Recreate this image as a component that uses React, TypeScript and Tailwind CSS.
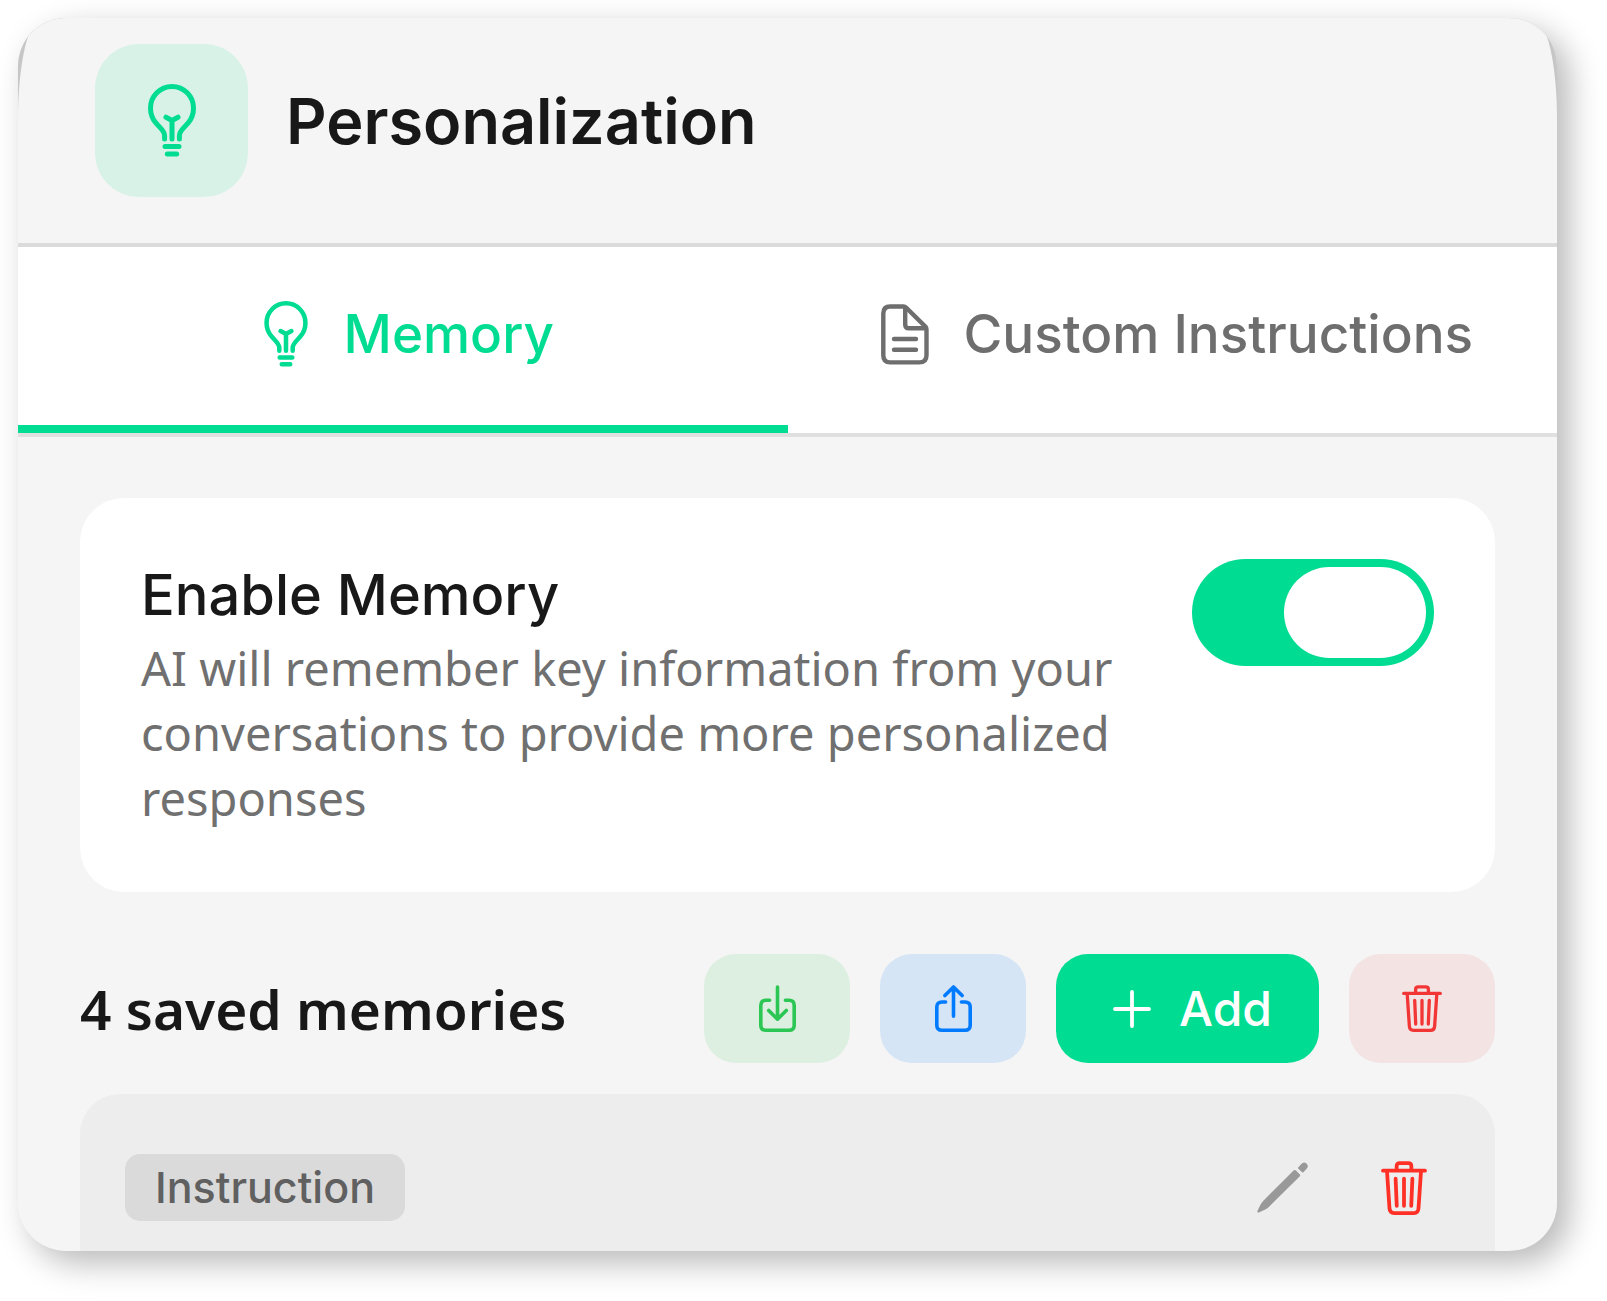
import { useState } from "react";
import type { ReactNode } from "react";

type IconProps = { className?: string };

function BulbIcon({ className }: IconProps) {
  return (
    <svg
      viewBox="0 0 48 73"
      className={className}
      fill="none"
      stroke="currentColor"
      strokeWidth="5"
      strokeLinecap="round"
      strokeLinejoin="round"
      aria-hidden
    >
      <path d="M16.6 55V51.8C16.6 46.5 11.4 43.6 7.6 38.6C4.4 34.6 2.5 30 2.5 24.2A21.5 21.7 0 0 1 45.5 24.2C45.5 30 43.6 34.6 40.4 38.6C36.6 43.6 31.4 46.5 31.4 51.8V55" />
      <path d="M24 55V36.5M18 33.2L24 36.5L30 33.2" />
      <path d="M17 62.5H31M19.3 70H28.7" />
    </svg>
  );
}

function DocIcon({ className }: IconProps) {
  return (
    <svg
      viewBox="0 0 48 61"
      className={className}
      fill="none"
      stroke="currentColor"
      strokeWidth="4.4"
      strokeLinecap="round"
      strokeLinejoin="round"
      aria-hidden
    >
      <path d="M9.2 2.5H22.5Q24 2.5 25 3.5L44.4 22.6Q45.5 23.8 45.5 25.4V51.2Q45.5 58.4 38.3 58.4H9.2Q2.3 58.4 2.3 51.2V9.5Q2.3 2.5 9.2 2.5Z" />
      <path d="M24.2 4V20.4Q24.2 24.3 28 24.3H44M13 35H35M13 45.7H35" />
    </svg>
  );
}

function ImportIcon({ className }: IconProps) {
  return (
    <svg
      viewBox="0 0 37 47"
      className={className}
      fill="none"
      stroke="currentColor"
      strokeWidth="3.6"
      strokeLinecap="round"
      strokeLinejoin="round"
      aria-hidden
    >
      <path d="M10.6 15.3H7Q1.8 15.3 1.8 20.5V40.2Q1.8 45.2 7 45.2H30Q35.2 45.2 35.2 40.2V20.5Q35.2 15.3 30 15.3H26.4" />
      <path d="M18.5 2V34M9.7 25.4L18.5 34.2L27.3 25.4" />
    </svg>
  );
}

function ShareIcon({ className }: IconProps) {
  return (
    <svg
      viewBox="0 0 37 47"
      className={className}
      fill="none"
      stroke="currentColor"
      strokeWidth="3.6"
      strokeLinecap="round"
      strokeLinejoin="round"
      aria-hidden
    >
      <path d="M10.6 17H7Q1.8 17 1.8 22V40.2Q1.8 45.2 7 45.2H30Q35.2 45.2 35.2 40.2V22Q35.2 17 30 17H26.4" />
      <path d="M18.5 31.2V2M9.9 10.6L18.5 2L27.1 10.6" />
    </svg>
  );
}

function TrashIcon({ className }: IconProps) {
  return (
    <svg
      viewBox="0 0 40 47"
      className={className}
      fill="none"
      stroke="currentColor"
      strokeWidth="3.3"
      strokeLinecap="round"
      strokeLinejoin="round"
      aria-hidden
    >
      <path d="M1.7 8.4H38.3M13.6 8V4.4Q13.6 1.9 16.2 1.9H23.8Q26.4 1.9 26.4 4.4V8" />
      <path d="M5.2 9L7.4 41.5Q7.7 45.3 11.4 45.3H28.6Q32.3 45.3 32.6 41.5L34.8 9" />
      <path d="M12.7 15.4L13.7 39M20 15.4V39M27.3 15.4L26.3 39" />
    </svg>
  );
}

function PlusIcon({ className }: IconProps) {
  return (
    <svg
      viewBox="0 0 38 38"
      className={className}
      fill="none"
      stroke="currentColor"
      strokeWidth="3.8"
      strokeLinecap="round"
      aria-hidden
    >
      <path d="M19 2V36M2 19H36" />
    </svg>
  );
}

function PencilIcon({ className }: IconProps) {
  return (
    <svg viewBox="0 0 51 51" className={className} fill="currentColor" aria-hidden>
      <path d="M36.6 8.6Q37.8 7.4 39 8.6L42.6 12.2Q43.8 13.4 42.6 14.6L12.4 44.4Q10.6 46.2 8.2 47.4L2.4 50.2Q-.4 51 .6 48.4L3.6 42.6Q4.8 40.2 6.6 38.4Z" />
      <path d="M41.2 5.4L43.8 2.4Q47 -1 49.6 1.8Q52.4 4.6 49 7.6L46.4 10.2Q45.6 10.8 44.8 10L41.4 6.8Q40.6 6.2 41.2 5.4Z" />
    </svg>
  );
}

type TabProps = {
  active: boolean;
  onSelect: () => void;
  icon: ReactNode;
  children: ReactNode;
};

function Tab({ active, onSelect, icon, children }: TabProps) {
  return (
    <button
      type="button"
      role="tab"
      aria-selected={active}
      onClick={onSelect}
      className={`flex flex-1 items-center justify-center gap-7 border-b-8 pb-1 pl-1 text-[53px] leading-[174px] font-medium whitespace-nowrap ${
        active
          ? "border-[#00dc91] text-[#00dc91]"
          : "border-transparent text-[#6e6e6e]"
      }`}
    >
      <span className="flex w-15 justify-center">{icon}</span>
      {children}
    </button>
  );
}

export default function App() {
  const [tab, setTab] = useState<"memory" | "instructions">("memory");
  const [enabled, setEnabled] = useState(true);

  return (
    <div className="bg-white pt-[18px] pr-[50px] pb-[50px] pl-[18px] font-['Inter',sans-serif] text-[#181818]">
      <div className="overflow-hidden rounded-[48px] bg-[#f5f5f5] shadow-[12px_12px_32px_rgba(0,0,0,0.28)]">
        <div className="bg-[#c6c6c6]">
          <header className="flex items-center gap-[38px] rounded-t-[24px_100px] border-b-4 border-[#dbdbdb] bg-[#f5f5f5] px-[77px] pt-[26px] pb-[46px]">
            <div className="flex size-[153px] items-center justify-center rounded-[44px] bg-[#d8f2e8] text-[#00dc91]">
              <BulbIcon className="h-[73px] w-[48px]" />
            </div>
            <h1 className="text-[63px] leading-[80px] font-semibold">Personalization</h1>
          </header>
        </div>

        <div role="tablist" className="flex border-b-4 border-[#e0e0e0] bg-white">
          <Tab
            active={tab === "memory"}
            onSelect={() => setTab("memory")}
            icon={<BulbIcon className="h-[66px] w-[44px]" />}
          >
            Memory
          </Tab>
          <Tab
            active={tab === "instructions"}
            onSelect={() => setTab("instructions")}
            icon={<DocIcon className="h-[61px] w-[48px]" />}
          >
            Custom Instructions
          </Tab>
        </div>

        <main className="px-[62px] pt-[61px]">
          <section className="flex items-start gap-12 rounded-[44px] bg-white p-[61px]">
            <div className="flex-1">
              <label
                htmlFor="enable-memory"
                className="mb-[5px] block text-[56px] leading-[72px] font-medium"
              >
                Enable Memory
              </label>
              <p className="font-['Noto_Sans',sans-serif] text-[47px] leading-[65px] text-[#707070]">
                AI will remember key information from your conversations to provide more
                personalized responses
              </p>
            </div>
            <input
              id="enable-memory"
              type="checkbox"
              role="switch"
              checked={enabled}
              onChange={(e) => setEnabled(e.target.checked)}
              className="h-[107px] w-[242px] shrink-0 appearance-none rounded-full bg-[#c9c9c9] p-2 transition before:block before:h-[91px] before:w-[142px] before:rounded-full before:bg-white before:content-[''] checked:bg-[#00dc91] checked:before:translate-x-[84px]"
            />
          </section>

          <div className="mt-[62px] flex items-center gap-[30px]">
            <h2 className="flex-1 font-['Noto_Sans',sans-serif] text-[55px] leading-[72px] font-semibold">
              4 saved memories
            </h2>
            <button
              type="button"
              aria-label="Import memories"
              className="flex h-[109px] w-[146px] items-center justify-center rounded-[32px] bg-[#ddefe1] text-[#2bc653]"
            >
              <ImportIcon className="h-[47px] w-[37px]" />
            </button>
            <button
              type="button"
              aria-label="Export memories"
              className="flex h-[109px] w-[146px] items-center justify-center rounded-[32px] bg-[#d6e5f5] text-[#007aff]"
            >
              <ShareIcon className="h-[47px] w-[37px]" />
            </button>
            <button
              type="button"
              className="flex h-[109px] items-center gap-7 rounded-[32px] bg-[#00dc91] pr-[47px] pl-[57px] text-[48px] font-medium text-white"
            >
              <PlusIcon className="size-[38px]" />
              Add
            </button>
            <button
              type="button"
              aria-label="Delete all memories"
              className="flex h-[109px] w-[146px] items-center justify-center rounded-[32px] bg-[#f3e3e3] text-[#f23636]"
            >
              <TrashIcon className="h-[47px] w-[40px]" />
            </button>
          </div>

          <article className="mt-[31px] flex items-center gap-[30px] rounded-t-[40px] bg-[#ededed] px-[45px] pt-[60px] pb-[30px]">
            <div className="flex-1">
              <span className="inline-block rounded-[15px] bg-[#dadada] px-[30px] align-top text-[43px] leading-[67px] font-medium text-[#606060]">
                Instruction
              </span>
            </div>
            <button
              type="button"
              aria-label="Edit memory"
              className="flex w-[92px] justify-center text-[#999999]"
            >
              <PencilIcon className="size-[51px]" />
            </button>
            <button
              type="button"
              aria-label="Delete memory"
              className="flex w-[92px] justify-center text-[#ff3126]"
            >
              <TrashIcon className="h-[54px] w-[46px]" />
            </button>
          </article>
        </main>
      </div>
    </div>
  );
}
